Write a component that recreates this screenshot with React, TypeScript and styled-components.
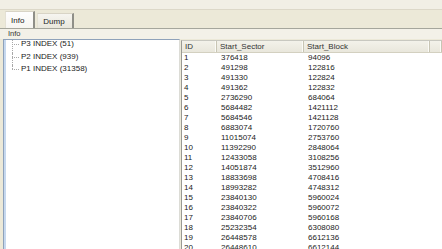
import React from "react";
import styled, { createGlobalStyle } from "styled-components";

const GlobalStyle = createGlobalStyle`
  html, body {
    margin: 0;
    padding: 0;
    background: #ecE9d8;
    overflow: hidden;
  }
  body {
    font-family: "Liberation Sans", Arial, sans-serif;
    font-size: 8px;
    color: #222;
  }
`;

const indexes = ["P3 INDEX (51)", "P2 INDEX (939)", "P1 INDEX (31358)"];

const blocks: [number, number, number][] = [
  [1, 376418, 94096],
  [2, 491298, 122816],
  [3, 491330, 122824],
  [4, 491362, 122832],
  [5, 2736290, 684064],
  [6, 5684482, 1421112],
  [7, 5684546, 1421128],
  [8, 6883074, 1720760],
  [9, 11015074, 2753760],
  [10, 11392290, 2848064],
  [11, 12433058, 3108256],
  [12, 14051874, 3512960],
  [13, 18833698, 4708416],
  [14, 18993282, 4748312],
  [15, 23840130, 5960024],
  [16, 23840322, 5960072],
  [17, 23840706, 5960168],
  [18, 25232354, 6308080],
  [19, 26448578, 6612136],
  [20, 26448610, 6612144],
];

const App: React.FC = () => (
  <Window>
    <GlobalStyle />
    <TopStrip />
    <TabStrip>
      <Tab active>Info</Tab>
      <Tab>Dump</Tab>
    </TabStrip>
    <Panel>
      <GroupHeader>
        <GroupLabel>Info</GroupLabel>
      </GroupHeader>
      <Body>
        <TreeBox>
          {indexes.map((name, i) => (
            <TreeItem key={name} last={i === indexes.length - 1}>
              {name}
            </TreeItem>
          ))}
        </TreeBox>
        <ListView>
          <HeaderRow>
            <HeaderCell>ID</HeaderCell>
            <HeaderCell>Start_Sector</HeaderCell>
            <HeaderCell>Start_Block</HeaderCell>
            <HeaderCell />
          </HeaderRow>
          {blocks.map(([id, sector, block]) => (
            <Row key={id}>
              <Cell>{id}</Cell>
              <Cell pad={4}>{sector}</Cell>
              <Cell pad={4}>{block}</Cell>
              <Cell />
            </Row>
          ))}
        </ListView>
      </Body>
    </Panel>
  </Window>
);

export default App;

const Window = styled.div`
  width: 442px;
  height: 249px;
  display: flex;
  flex-direction: column;
  overflow: hidden;
  background: #ece9d8;
`;

const TopStrip = styled.div`
  height: 9px;
  flex: none;
  background: #f1efe5;
  border-bottom: 1px solid #dcd8c8;
`;

const TabStrip = styled.div`
  height: 18px;
  flex: none;
  display: flex;
  align-items: flex-end;
  padding-left: 5px;
  gap: 2px;
`;

const Tab = styled.div<{ active?: boolean }>`
  height: ${(p) => (p.active ? 17 : 15)}px;
  padding: 0 ${(p) => (p.active ? 9 : 7)}px 0 5px;
  display: flex;
  align-items: center;
  box-sizing: border-box;
  background: ${(p) =>
    p.active
      ? "linear-gradient(#fefefe, #f7f6f1)"
      : "linear-gradient(#f6f5f0, #e9e7dc)"};
  border-top: 1px solid #d8d4c6;
  border-left: 1px solid #e4e1d4;
  border-right: 2px solid #8f8f88;
  color: #222;
`;

const Panel = styled.div`
  flex: 1;
  display: flex;
  flex-direction: column;
  border-top: 1px solid #a5a69c;
  min-height: 0;
`;

const GroupHeader = styled.div`
  height: 10px;
  flex: none;
  padding-left: 8px;
  background: #f3f1e8;
  display: flex;
  align-items: center;
`;

const GroupLabel = styled.span`
  font-size: 7.5px;
  color: #333;
  line-height: 8px;
`;

const Body = styled.div`
  flex: 1;
  display: flex;
  gap: 1px;
  padding-left: 3px;
  min-height: 0;
`;

const TreeBox = styled.div`
  width: 177px;
  flex: none;
  box-sizing: border-box;
  background: #fff;
  border: 1px solid #8fa2ba;
  border-right-color: #dcdcd6;
  border-bottom: none;
  box-shadow: inset 2px 0 0 #c6d8ee;
  padding-left: 17px;
`;

const TreeItem = styled.div<{ last?: boolean }>`
  position: relative;
  height: 12.5px;
  line-height: 8px;
  white-space: nowrap;
  color: #222;

  &::before {
    content: "";
    position: absolute;
    left: -9px;
    top: 0;
    height: ${(p) => (p.last ? "4px" : "100%")};
    border-left: 1px dotted #a8a8a8;
  }

  &::after {
    content: "";
    position: absolute;
    left: -9px;
    top: 4px;
    width: 7px;
    border-top: 1px dotted #a8a8a8;
  }
`;

const ListView = styled.div`
  flex: 1;
  margin-top: 1px;
  background: #fff;
  border-left: 1px solid #9a9a94;
  border-top: 1px solid #c8c8c0;
  min-width: 0;
`;

const columns = "35px 87px 126px 1fr";

const HeaderRow = styled.div`
  display: grid;
  grid-template-columns: ${columns};
  height: 11px;
  background: linear-gradient(#f3f2ea, #e9e7dc);
  border-bottom: 1px solid #d3d0c0;
`;

const HeaderCell = styled.div`
  padding-left: 3px;
  line-height: 11px;
  color: #333;
  white-space: nowrap;
  border-right: 1px solid #c8c5b4;
  box-shadow: inset -1px 0 0 #fbfbf7;
`;

const Row = styled.div`
  display: grid;
  grid-template-columns: ${columns};
  height: 10px;
`;

const Cell = styled.div<{ pad?: number }>`
  padding-left: ${(p) => p.pad ?? 2}px;
  line-height: 10px;
  white-space: nowrap;
  color: #222;
`;
